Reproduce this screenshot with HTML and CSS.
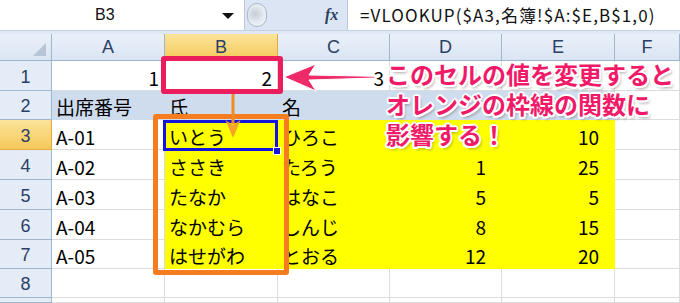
FILE: index.html
```html
<!DOCTYPE html>
<html>
<head>
  <title>VLOOKUP 列番号の参照</title>
  <link rel="stylesheet" href="styles.css">
</head>
<body>

  <div class="formula-bar">
    <div class="name-box">
      <span class="name">B3</span>
      <span class="caret"></span>
    </div>
    <div class="splitter"><span class="knob"></span></div>
    <div class="fx">fx</div>
    <div class="formula">=VLOOKUP($A3,名簿!$A:$E,B$1,0)</div>
  </div>
  <div class="strip"></div>

  <div class="sheet">
    <!-- column headers -->
    <div class="corner"><span class="tri"></span></div>
    <div class="ch">A</div>
    <div class="ch sel">B</div>
    <div class="ch">C</div>
    <div class="ch">D</div>
    <div class="ch">E</div>
    <div class="ch">F</div>

    <!-- row 1 -->
    <div class="rh">1</div>
    <div class="c num">1</div>
    <div class="c num">2</div>
    <div class="c num">3</div>
    <div class="c"></div>
    <div class="c"></div>
    <div class="c"></div>

    <!-- row 2 -->
    <div class="rh">2</div>
    <div class="c head">出席番号</div>
    <div class="c head">氏</div>
    <div class="c head">名</div>
    <div class="c head"></div>
    <div class="c head"></div>
    <div class="c"></div>

    <!-- row 3 -->
    <div class="rh sel">3</div>
    <div class="c">A-01</div>
    <div class="c y">いとう</div>
    <div class="c y">ひろこ</div>
    <div class="c y num pad"></div>
    <div class="c y num pad">10</div>
    <div class="c"></div>

    <div class="rh">4</div>
    <div class="c">A-02</div>
    <div class="c y">ささき</div>
    <div class="c y">たろう</div>
    <div class="c y num pad">1</div>
    <div class="c y num pad">25</div>
    <div class="c"></div>

    <div class="rh">5</div>
    <div class="c">A-03</div>
    <div class="c y">たなか</div>
    <div class="c y">はなこ</div>
    <div class="c y num pad">5</div>
    <div class="c y num pad">5</div>
    <div class="c"></div>

    <div class="rh">6</div>
    <div class="c">A-04</div>
    <div class="c y">なかむら</div>
    <div class="c y">しんじ</div>
    <div class="c y num pad">8</div>
    <div class="c y num pad">15</div>
    <div class="c"></div>

    <div class="rh">7</div>
    <div class="c">A-05</div>
    <div class="c y">はせがわ</div>
    <div class="c y">とおる</div>
    <div class="c y num pad">12</div>
    <div class="c y num pad">20</div>
    <div class="c"></div>

    <div class="rh">8</div>
    <div class="c"></div>
    <div class="c"></div>
    <div class="c"></div>
    <div class="c"></div>
    <div class="c"></div>
    <div class="c"></div>

    <!-- row 9 only shows as a sliver at the bottom edge -->
    <div class="rh"></div>
    <div class="c"></div>
    <div class="c"></div>
    <div class="c"></div>
    <div class="c"></div>
    <div class="c"></div>
    <div class="c"></div>
  </div>

  <!-- annotations drawn over the sheet -->
  <div class="active-cell"><span class="handle"></span></div>
  <div class="pink-box"></div>
  <div class="orange-box"></div>

  <svg class="down-arrow" width="26" height="48" viewBox="0 0 26 48">
    <rect x="11.5" y="2" width="3" height="30" fill="#f08a24"/>
    <path d="M5.5 28 L13 33 L20.5 28 L13 46 Z" fill="#f39a2c" opacity="0.9"/>
  </svg>

  <svg class="left-arrow" width="110" height="36" viewBox="0 0 110 36">
    <path d="M4 17 L36 4 L29 15 L95 16.3 L95 18 L29 20 L36 31 Z"
          fill="#ee2a68" stroke="#fff" stroke-width="1" stroke-linejoin="round"/>
  </svg>

  <div class="callout">
    このセルの値を変更すると<br>
    オレンジの枠線の関数に<br>
    影響する！
  </div>

</body>
</html>
```

FILE: styles.css
```css
* { box-sizing: border-box; margin: 0; padding: 0; }

body {
  width: 680px;
  height: 303px;
  overflow: hidden;
  position: relative;
  background: #fff;
  font-family: "Noto Sans CJK JP", "Liberation Sans", sans-serif;
  color: #000;
}

/* ---------- formula bar ---------- */

.formula-bar {
  display: flex;
  height: 30px;
  background: #dbe5f3;
}

.name-box {
  width: 245px;
  background: #fff;
  display: flex;
  align-items: center;
  border-right: 1px solid #b9c9dc;
  position: relative;
}

.name {
  font-family: "Liberation Sans", sans-serif;
  font-size: 16px;
  margin-left: 95px;
  color: #111;
}

.caret {
  position: absolute;
  left: 222px;
  top: 13px;
  border-left: 6px solid transparent;
  border-right: 6px solid transparent;
  border-top: 6px solid #111;
}

.splitter {
  width: 80px;
  display: flex;
  align-items: center;
  padding-left: 2px;
}

.knob {
  width: 20px;
  height: 24px;
  border-radius: 12px;
  border: 1px solid #a9b8cc;
  background: radial-gradient(circle at 40% 45%, #c4ccd6 0, #e7ecf2 55%, #f3f6fa 100%);
}

.fx {
  width: 22px;
  font-family: "Liberation Serif", serif;
  font-style: italic;
  font-weight: bold;
  font-size: 16px;
  color: #2b3f5e;
  display: flex;
  align-items: center;
}

.formula {
  flex: 1;
  background: #fff;
  border-left: 1px solid #b9c9dc;
  padding-left: 12px;
  font-size: 17px;
  letter-spacing: 1.1px;
  line-height: 30px;
  color: #111;
  white-space: nowrap;
  overflow: hidden;
}

.strip {
  height: 4px;
  background: #dfe8f4;
  border-top: 1px solid #c5d2e2;
}

/* ---------- sheet grid ---------- */

.sheet {
  display: grid;
  grid-template-columns: 52px 113px 113px 112px 112px 113px 65px;
  grid-template-rows: 27px 30px 29px 30px 30px 30px 30px 29px 29px 5px;
}

.corner, .ch, .rh {
  background: linear-gradient(#eaf0f8, #dae5f3);
  border-right: 1px solid #9eb6ce;
  border-bottom: 1px solid #9eb6ce;
  color: #2a4066;
  font-family: "Liberation Sans", sans-serif;
  font-size: 18px;
  display: flex;
  align-items: center;
  justify-content: center;
}

.corner {
  position: relative;
}

.tri {
  position: absolute;
  right: 5px;
  bottom: 4px;
  border-left: 13px solid transparent;
  border-bottom: 13px solid #b6c4d6;
}

.rh {
  background: #e4ecf7;
  padding-top: 3px;
}

.ch.sel, .rh.sel {
  background: linear-gradient(#fbe49a, #f5c85a);
  border-right-color: #e3aa3e;
  border-bottom-color: #e3aa3e;
}

.c {
  border-right: 1px solid #dadcdd;
  border-bottom: 1px solid #dadcdd;
  font-size: 19px;
  display: flex;
  align-items: center;
  padding: 3px 0 0 4px;
  white-space: nowrap;
  overflow: hidden;
}

.num {
  justify-content: flex-end;
  padding-right: 5px;
}

.pad {
  padding-right: 15px;
}

.head {
  background: #cfdcee;
  border-color: #cfdcee;
}

.y {
  background: #ffff00;
  border-color: #ffff00;
}

/* ---------- overlays ---------- */

.active-cell {
  position: absolute;
  left: 163px;
  top: 120px;
  width: 115px;
  height: 31px;
  border: 3px solid #1414dc;
}

.handle {
  position: absolute;
  right: -6px;
  bottom: -7px;
  width: 8px;
  height: 8px;
  background: #1414dc;
  border: 1px solid #fff;
}

.pink-box {
  position: absolute;
  left: 161px;
  top: 56px;
  width: 122px;
  height: 38px;
  border: 5px solid #ec1d5c;
  border-radius: 3px;
}

.orange-box {
  position: absolute;
  left: 153px;
  top: 114px;
  width: 136px;
  height: 161px;
  border: 5px solid #f57d1f;
  border-radius: 3px;
}

.down-arrow {
  position: absolute;
  left: 220px;
  top: 92px;
}

.left-arrow {
  position: absolute;
  left: 280px;
  top: 60px;
}

.callout {
  position: absolute;
  left: 386px;
  top: 59px;
  font-size: 24px;
  line-height: 30px;
  font-weight: bold;
  color: #f01a68;
  white-space: nowrap;
  text-shadow:
    2px 0 #fff, -2px 0 #fff, 0 2px #fff, 0 -2px #fff,
    1.5px 1.5px #fff, -1.5px -1.5px #fff, 1.5px -1.5px #fff, -1.5px 1.5px #fff,
    2px 3px 3px rgba(0, 0, 0, 0.35);
}
```
